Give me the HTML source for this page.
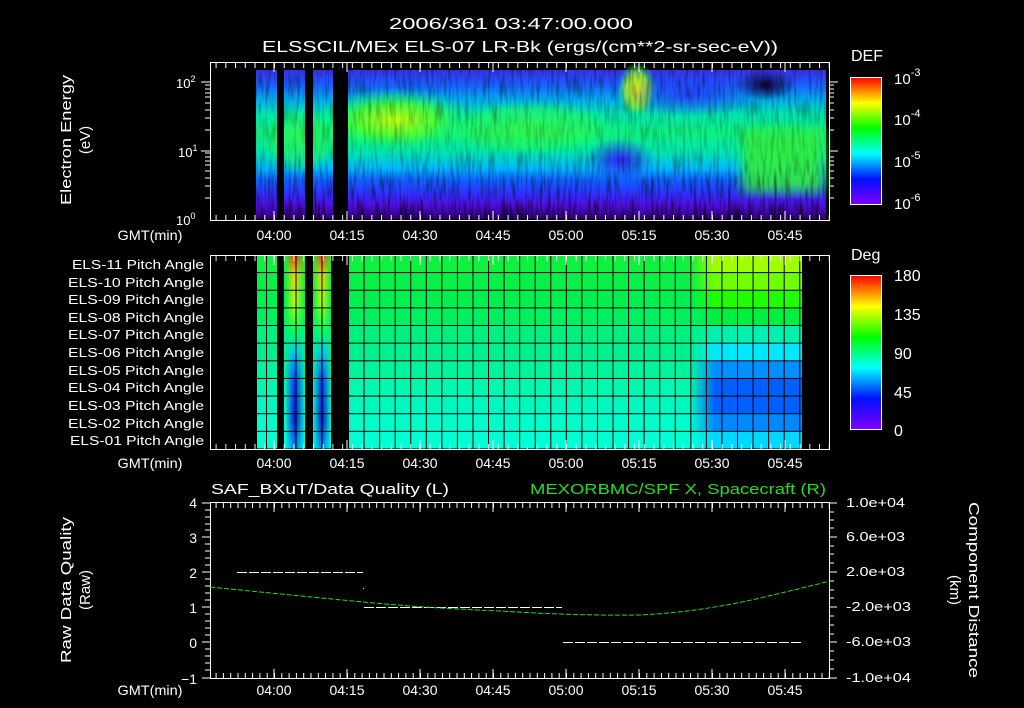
<!DOCTYPE html>
<html><head><meta charset="utf-8"><style>
html,body{margin:0;padding:0;background:#000;}
svg{display:block;}
text{font-family:"Liberation Sans",sans-serif;fill:#fff;}
</style></head><body>
<svg width="1024" height="708" viewBox="0 0 1024 708" xmlns="http://www.w3.org/2000/svg">
<defs>
<linearGradient id="base" x1="0" y1="70" x2="0" y2="219" gradientUnits="userSpaceOnUse">
<stop offset="0" stop-color="#3a30f0"/>
<stop offset="0.1" stop-color="#1a60ff"/>
<stop offset="0.2" stop-color="#00b0f0"/>
<stop offset="0.3" stop-color="#00e8b0"/>
<stop offset="0.42" stop-color="#10f080"/>
<stop offset="0.55" stop-color="#00e8b0"/>
<stop offset="0.66" stop-color="#00b8ff"/>
<stop offset="0.74" stop-color="#1060ff"/>
<stop offset="0.83" stop-color="#3030ff"/>
<stop offset="0.9" stop-color="#5010e8"/>
<stop offset="1" stop-color="#300070"/>
</linearGradient>
<linearGradient id="cb" x1="0" y1="0" x2="0" y2="1">
<stop offset="0" stop-color="#ff0000"/>
<stop offset="0.1" stop-color="#ff8000"/>
<stop offset="0.2" stop-color="#ffff00"/>
<stop offset="0.4" stop-color="#00ff00"/>
<stop offset="0.6" stop-color="#00ffff"/>
<stop offset="0.8" stop-color="#0010ff"/>
<stop offset="1" stop-color="#8000ff"/>
</linearGradient>
<radialGradient id="g1"><stop offset="0" stop-color="#c0ff10"/><stop offset="0.5" stop-color="#50ff30" stop-opacity="0.9"/><stop offset="1" stop-color="#00ff80" stop-opacity="0"/></radialGradient>
<radialGradient id="g2"><stop offset="0" stop-color="#f0ff00"/><stop offset="0.6" stop-color="#a0ff20" stop-opacity="0.8"/><stop offset="1" stop-color="#00ff80" stop-opacity="0"/></radialGradient>
<radialGradient id="g3"><stop offset="0" stop-color="#50ff20"/><stop offset="0.7" stop-color="#30ff40" stop-opacity="0.8"/><stop offset="1" stop-color="#00ff80" stop-opacity="0"/></radialGradient>
<radialGradient id="gb"><stop offset="0" stop-color="#3020ff"/><stop offset="1" stop-color="#3020ff" stop-opacity="0"/></radialGradient>
<radialGradient id="gk"><stop offset="0" stop-color="#100030"/><stop offset="1" stop-color="#100030" stop-opacity="0"/></radialGradient>
<filter id="noise" x="0" y="0" width="100%" height="100%">
<feTurbulence type="fractalNoise" baseFrequency="0.35 0.04" numOctaves="2" seed="3"/>
<feColorMatrix type="matrix" values="0 0 0 0 0  0 0 0 0 0  0 0 0 0 0  -2.2 0 0 0 1.25"/>
</filter>
<filter id="bl"><feGaussianBlur stdDeviation="6"/></filter>
<linearGradient id="nmask" x1="0" y1="70" x2="0" y2="219" gradientUnits="userSpaceOnUse">
<stop offset="0" stop-color="#fff" stop-opacity="0.5"/>
<stop offset="0.5" stop-color="#fff" stop-opacity="0.25"/>
<stop offset="0.85" stop-color="#fff" stop-opacity="0.6"/>
<stop offset="1" stop-color="#fff" stop-opacity="0.9"/>
</linearGradient>
<mask id="nm"><rect x="256" y="70" width="570" height="149" fill="url(#nmask)"/></mask>
<pattern id="tk2" x="274" y="0" width="9.733" height="708" patternUnits="userSpaceOnUse"><rect x="0" y="0" width="1" height="708" fill="#fff"/></pattern>
<pattern id="tk3" x="274" y="0" width="7.3" height="708" patternUnits="userSpaceOnUse"><rect x="0" y="0" width="1" height="708" fill="#fff"/></pattern>
</defs>

<text x="511" y="29" font-size="16" text-anchor="middle" textLength="244" lengthAdjust="spacingAndGlyphs">2006/361 03:47:00.000</text>
<text x="520" y="52" font-size="16" text-anchor="middle" textLength="516" lengthAdjust="spacingAndGlyphs">ELSSCIL/MEx ELS-07 LR-Bk  (ergs/(cm**2-sr-sec-eV))</text>

<!-- TOP PANEL -->
<rect x="256" y="70" width="570" height="149" fill="url(#base)"/>
<ellipse cx="395" cy="120" rx="80" ry="32" fill="url(#g1)"/>
<ellipse cx="530" cy="128" rx="90" ry="28" fill="url(#g3)" opacity="0.55"/>
<ellipse cx="637" cy="90" rx="20" ry="28" fill="url(#g2)"/>
<rect x="742" y="130" width="82" height="62" fill="#30f040" filter="url(#bl)" opacity="0.9"/>
<ellipse cx="620" cy="160" rx="35" ry="22" fill="url(#gb)"/>
<ellipse cx="690" cy="95" rx="70" ry="22" fill="url(#gb)" opacity="0.7"/>
<ellipse cx="765" cy="85" rx="30" ry="16" fill="url(#gk)"/>
<ellipse cx="300" cy="140" rx="40" ry="35" fill="url(#g3)" opacity="0.45"/>
<rect x="256" y="70" width="570" height="149" filter="url(#noise)" mask="url(#nm)"/>
<rect x="277" y="70" width="7" height="150" fill="#000"/>
<rect x="305" y="70" width="8" height="150" fill="#000"/>
<rect x="333" y="70" width="15" height="150" fill="#000"/>
<rect x="210.5" y="62.5" width="619" height="158" fill="none" stroke="#fff" stroke-width="1"/>
<rect x="211" y="63" width="618" height="5" fill="url(#tk2)"/>
<rect x="211" y="215" width="618" height="5" fill="url(#tk2)"/>
<path d="M274 63v9M347 63v9M420 63v9M493 63v9M566 63v9M639 63v9M712 63v9M785 63v9M274 220v-9M347 220v-9M420 220v-9M493 220v-9M566 220v-9M639 220v-9M712 220v-9M785 220v-9" stroke="#fff"/>
<path d="M201 82h9M201 151h9M205 85h5M205 89h5M205 93h5M205 97h5M205 103h5M205 110h5M205 118h5M205 130h5M205 153h5M205 157h5M205 161h5M205 165h5M205 171h5M205 178h5M205 186h5M205 198h5M829 82h9M829 151h9M829 85h5M829 89h5M829 93h5M829 97h5M829 103h5M829 110h5M829 118h5M829 130h5M829 157h5M829 161h5M829 165h5M829 171h5M829 178h5M829 186h5M829 198h5" stroke="#fff"/>
<text x="176" y="88" font-size="13">10<tspan dy="-6" font-size="9">2</tspan></text>
<text x="178" y="157" font-size="13">10<tspan dy="-6" font-size="9">1</tspan></text>
<text x="176" y="225" font-size="13">10<tspan dy="-6" font-size="9">0</tspan></text>
<text transform="translate(71,140) rotate(-90)" font-size="15" text-anchor="middle" textLength="130" lengthAdjust="spacingAndGlyphs">Electron Energy</text>
<text transform="translate(90,140) rotate(-90)" font-size="15" text-anchor="middle">(eV)</text>
<text x="150" y="240" font-size="14" text-anchor="middle" textLength="65" lengthAdjust="spacingAndGlyphs">GMT(min)</text>
<g font-size="14" text-anchor="middle">
<text x="274" y="240">04:00</text><text x="347" y="240">04:15</text><text x="420" y="240">04:30</text><text x="493" y="240">04:45</text><text x="566" y="240">05:00</text><text x="639" y="240">05:15</text><text x="712" y="240">05:30</text><text x="785" y="240">05:45</text>
</g>
<text x="851" y="61" font-size="16">DEF</text>
<rect x="850.5" y="77.5" width="31" height="127" fill="url(#cb)" stroke="#fff"/>
<g font-size="15">
<text x="894" y="84">10<tspan dy="-8" font-size="11">-3</tspan></text>
<text x="894" y="125">10<tspan dy="-8" font-size="11">-4</tspan></text>
<text x="894" y="167">10<tspan dy="-8" font-size="11">-5</tspan></text>
<text x="894" y="209">10<tspan dy="-8" font-size="11">-6</tspan></text>
</g>

<!-- MIDDLE PANEL -->
<g>
<rect x="256" y="255.0" width="546" height="17.6" fill="#10f040"/>
<rect x="256" y="272.6" width="546" height="17.6" fill="#08f048"/>
<rect x="256" y="290.3" width="546" height="17.6" fill="#00f050"/>
<rect x="256" y="307.9" width="546" height="17.6" fill="#00f060"/>
<rect x="256" y="325.5" width="546" height="17.6" fill="#00f080"/>
<rect x="256" y="343.2" width="546" height="17.6" fill="#00f090"/>
<rect x="256" y="360.8" width="546" height="17.6" fill="#00f4a0"/>
<rect x="256" y="378.4" width="546" height="17.6" fill="#00f8b0"/>
<rect x="256" y="396.0" width="546" height="17.6" fill="#00f8c0"/>
<rect x="256" y="413.7" width="546" height="17.6" fill="#00fcc8"/>
<rect x="256" y="431.3" width="546" height="17.7" fill="#00ffd4"/>
<linearGradient id="fadeR" x1="690" x2="715" y1="0" y2="0" gradientUnits="userSpaceOnUse"><stop offset="0" stop-color="#fff" stop-opacity="0"/><stop offset="1" stop-color="#fff"/></linearGradient>
<mask id="mr"><rect x="690" y="255" width="112" height="194" fill="url(#fadeR)"/></mask>
<g mask="url(#mr)">
<rect x="690" y="255.0" width="112" height="17.6" fill="#a0ff00"/>
<rect x="690" y="272.6" width="112" height="17.6" fill="#70ff00"/>
<rect x="690" y="290.3" width="112" height="17.6" fill="#20ff00"/>
<rect x="690" y="307.9" width="112" height="17.6" fill="#00f040"/>
<rect x="690" y="325.5" width="112" height="17.6" fill="#00f0b0"/>
<rect x="690" y="343.2" width="112" height="17.6" fill="#00e8ff"/>
<rect x="690" y="360.8" width="112" height="17.6" fill="#0090ff"/>
<rect x="690" y="378.4" width="112" height="17.6" fill="#0060ff"/>
<rect x="690" y="396.0" width="112" height="17.6" fill="#0060ff"/>
<rect x="690" y="413.7" width="112" height="17.6" fill="#0088ff"/>
<rect x="690" y="431.3" width="112" height="17.7" fill="#00d8ff"/>
</g>
<linearGradient id="st" x1="0" y1="255" x2="0" y2="449" gradientUnits="userSpaceOnUse">
<stop offset="0" stop-color="#ff3000"/><stop offset="0.1" stop-color="#ffd000"/><stop offset="0.25" stop-color="#c0ff00"/><stop offset="0.4" stop-color="#00ff60"/><stop offset="0.5" stop-color="#00c0ff"/><stop offset="0.65" stop-color="#0030ff"/><stop offset="0.85" stop-color="#0010d0"/><stop offset="1" stop-color="#0080ff"/>
</linearGradient>
<linearGradient id="hm" x1="0" x2="1" y1="0" y2="0"><stop offset="0" stop-color="#fff" stop-opacity="0"/><stop offset="0.5" stop-color="#fff"/><stop offset="1" stop-color="#fff" stop-opacity="0"/></linearGradient>
<mask id="m1"><rect x="285" y="255" width="20" height="194" fill="url(#hm)"/></mask>
<mask id="m2"><rect x="313" y="255" width="18" height="194" fill="url(#hm)"/></mask>
<rect x="285" y="255" width="20" height="194" fill="url(#st)" mask="url(#m1)"/>
<rect x="313" y="255" width="18" height="194" fill="url(#st)" mask="url(#m2)"/>
<rect x="277" y="255" width="7" height="194" fill="#000"/>
<rect x="305" y="255" width="8" height="194" fill="#000"/>
<rect x="331" y="255" width="17" height="194" fill="#000"/>
<pattern id="gv" x="348" y="0" width="15.56" height="708" patternUnits="userSpaceOnUse"><rect x="0" y="0" width="1" height="708" fill="#000"/></pattern>
<pattern id="gh" x="0" y="272.1" width="1024" height="17.64" patternUnits="userSpaceOnUse"><rect x="0" y="0" width="1024" height="1" fill="#000"/></pattern>
<rect x="348" y="255" width="454" height="194" fill="url(#gv)"/>
<rect x="256" y="255" width="546" height="194" fill="url(#gh)"/>
<path d="M256.5 255v194M266.5 255v194M296 255v194M322 255v194" stroke="#000"/>
</g>
<rect x="210.5" y="255.5" width="619" height="194" fill="none" stroke="#fff"/>
<rect x="211" y="256" width="618" height="5" fill="url(#tk2)" opacity="0.9"/>
<rect x="211" y="444" width="618" height="5" fill="url(#tk2)" opacity="0.9"/>
<path d="M274 256v9M347 256v9M420 256v9M493 256v9M566 256v9M639 256v9M712 256v9M785 256v9M274 449v-9M347 449v-9M420 449v-9M493 449v-9M566 449v-9M639 449v-9M712 449v-9M785 449v-9" stroke="#fff"/>
<g font-size="13" text-anchor="end">
<text x="204" y="269" textLength="132" lengthAdjust="spacingAndGlyphs">ELS-11 Pitch Angle</text>
<text x="204" y="287" textLength="136" lengthAdjust="spacingAndGlyphs">ELS-10 Pitch Angle</text>
<text x="204" y="304" textLength="136" lengthAdjust="spacingAndGlyphs">ELS-09 Pitch Angle</text>
<text x="204" y="322" textLength="136" lengthAdjust="spacingAndGlyphs">ELS-08 Pitch Angle</text>
<text x="204" y="339" textLength="136" lengthAdjust="spacingAndGlyphs">ELS-07 Pitch Angle</text>
<text x="204" y="357" textLength="136" lengthAdjust="spacingAndGlyphs">ELS-06 Pitch Angle</text>
<text x="204" y="375" textLength="136" lengthAdjust="spacingAndGlyphs">ELS-05 Pitch Angle</text>
<text x="204" y="392" textLength="136" lengthAdjust="spacingAndGlyphs">ELS-04 Pitch Angle</text>
<text x="204" y="410" textLength="136" lengthAdjust="spacingAndGlyphs">ELS-03 Pitch Angle</text>
<text x="204" y="428" textLength="136" lengthAdjust="spacingAndGlyphs">ELS-02 Pitch Angle</text>
<text x="204" y="445" textLength="134" lengthAdjust="spacingAndGlyphs">ELS-01 Pitch Angle</text>
</g>
<text x="150" y="468" font-size="14" text-anchor="middle" textLength="65" lengthAdjust="spacingAndGlyphs">GMT(min)</text>
<g font-size="14" text-anchor="middle">
<text x="274" y="468">04:00</text><text x="347" y="468">04:15</text><text x="420" y="468">04:30</text><text x="493" y="468">04:45</text><text x="566" y="468">05:00</text><text x="639" y="468">05:15</text><text x="712" y="468">05:30</text><text x="785" y="468">05:45</text>
</g>
<text x="851" y="260" font-size="16">Deg</text>
<rect x="850.5" y="275.5" width="31" height="154" fill="url(#cb)" stroke="#fff"/>
<g font-size="16">
<text x="894" y="281">180</text><text x="894" y="320">135</text><text x="894" y="359">90</text><text x="894" y="398">45</text><text x="894" y="436">0</text>
</g>

<!-- BOTTOM PANEL -->
<text x="211" y="494" font-size="15" textLength="238" lengthAdjust="spacingAndGlyphs">SAF_BXuT/Data Quality (L)</text>
<text x="530" y="494" font-size="15" textLength="296" lengthAdjust="spacingAndGlyphs" style="fill:#22dd22">MEXORBMC/SPF X, Spacecraft (R)</text>
<rect x="210.5" y="502.5" width="619" height="176" fill="none" stroke="#fff"/>
<rect x="211" y="503" width="618" height="5" fill="url(#tk3)"/>
<rect x="211" y="673" width="618" height="5" fill="url(#tk3)"/>
<path d="M274 503v9M347 503v9M420 503v9M493 503v9M566 503v9M639 503v9M712 503v9M785 503v9M274 678v-9M347 678v-9M420 678v-9M493 678v-9M566 678v-9M639 678v-9M712 678v-9M785 678v-9" stroke="#fff"/>
<path d="M202 503h8M202 537h8M202 572h8M202 607h8M202 642h8M202 678h8M205 510h5M205 517h5M205 524h5M205 530h5M205 544h5M205 551h5M205 558h5M205 565h5M205 579h5M205 586h5M205 593h5M205 600h5M205 614h5M205 621h5M205 628h5M205 635h5M205 649h5M205 656h5M205 663h5M205 670h5M829 503h8M829 537h8M829 572h8M829 607h8M829 642h8M829 678h8M829 512h5M829 520h5M829 528h5M829 546h5M829 554h5M829 563h5M829 581h5M829 590h5M829 598h5M829 616h5M829 625h5M829 634h5M829 651h5M829 660h5M829 669h5" stroke="#fff"/>
<g font-size="14" text-anchor="end">
<text x="197" y="508">4</text><text x="197" y="543">3</text><text x="197" y="578">2</text><text x="197" y="613">1</text><text x="197" y="648">0</text><text x="197" y="684">−1</text>
</g>
<g font-size="13">
<text x="846" y="507" textLength="59" lengthAdjust="spacingAndGlyphs">1.0e+04</text><text x="846" y="541" textLength="59" lengthAdjust="spacingAndGlyphs">6.0e+03</text><text x="846" y="576" textLength="59" lengthAdjust="spacingAndGlyphs">2.0e+03</text><text x="846" y="611" textLength="65" lengthAdjust="spacingAndGlyphs">-2.0e+03</text><text x="846" y="646" textLength="65" lengthAdjust="spacingAndGlyphs">-6.0e+03</text><text x="846" y="682" textLength="65" lengthAdjust="spacingAndGlyphs">-1.0e+04</text>
</g>
<text transform="translate(71,590) rotate(-90)" font-size="15" text-anchor="middle" textLength="146" lengthAdjust="spacingAndGlyphs">Raw Data Quality</text>
<text transform="translate(90,590) rotate(-90)" font-size="15" text-anchor="middle">(Raw)</text>
<text transform="translate(969,590) rotate(90)" font-size="15" text-anchor="middle" textLength="176" lengthAdjust="spacingAndGlyphs">Component Distance</text>
<text transform="translate(950,590) rotate(90)" font-size="15" text-anchor="middle">(km)</text>
<path d="M237 572.5H363M364 607.5H562M563 642.5H802" stroke="#fff" stroke-dasharray="10 2"/>
<rect x="363" y="588" width="1" height="1" fill="#fff"/>
<path d="M210 587 Q300 596 363 602 T500 611 Q580 616 640 615 Q700 612 760 598 T829 581" fill="none" stroke="#22dd22" stroke-dasharray="5 2"/>
<text x="150" y="695" font-size="14" text-anchor="middle" textLength="65" lengthAdjust="spacingAndGlyphs">GMT(min)</text>
<g font-size="14" text-anchor="middle">
<text x="274" y="695">04:00</text><text x="347" y="695">04:15</text><text x="420" y="695">04:30</text><text x="493" y="695">04:45</text><text x="566" y="695">05:00</text><text x="639" y="695">05:15</text><text x="712" y="695">05:30</text><text x="785" y="695">05:45</text>
</g>
</svg>
</body></html>
